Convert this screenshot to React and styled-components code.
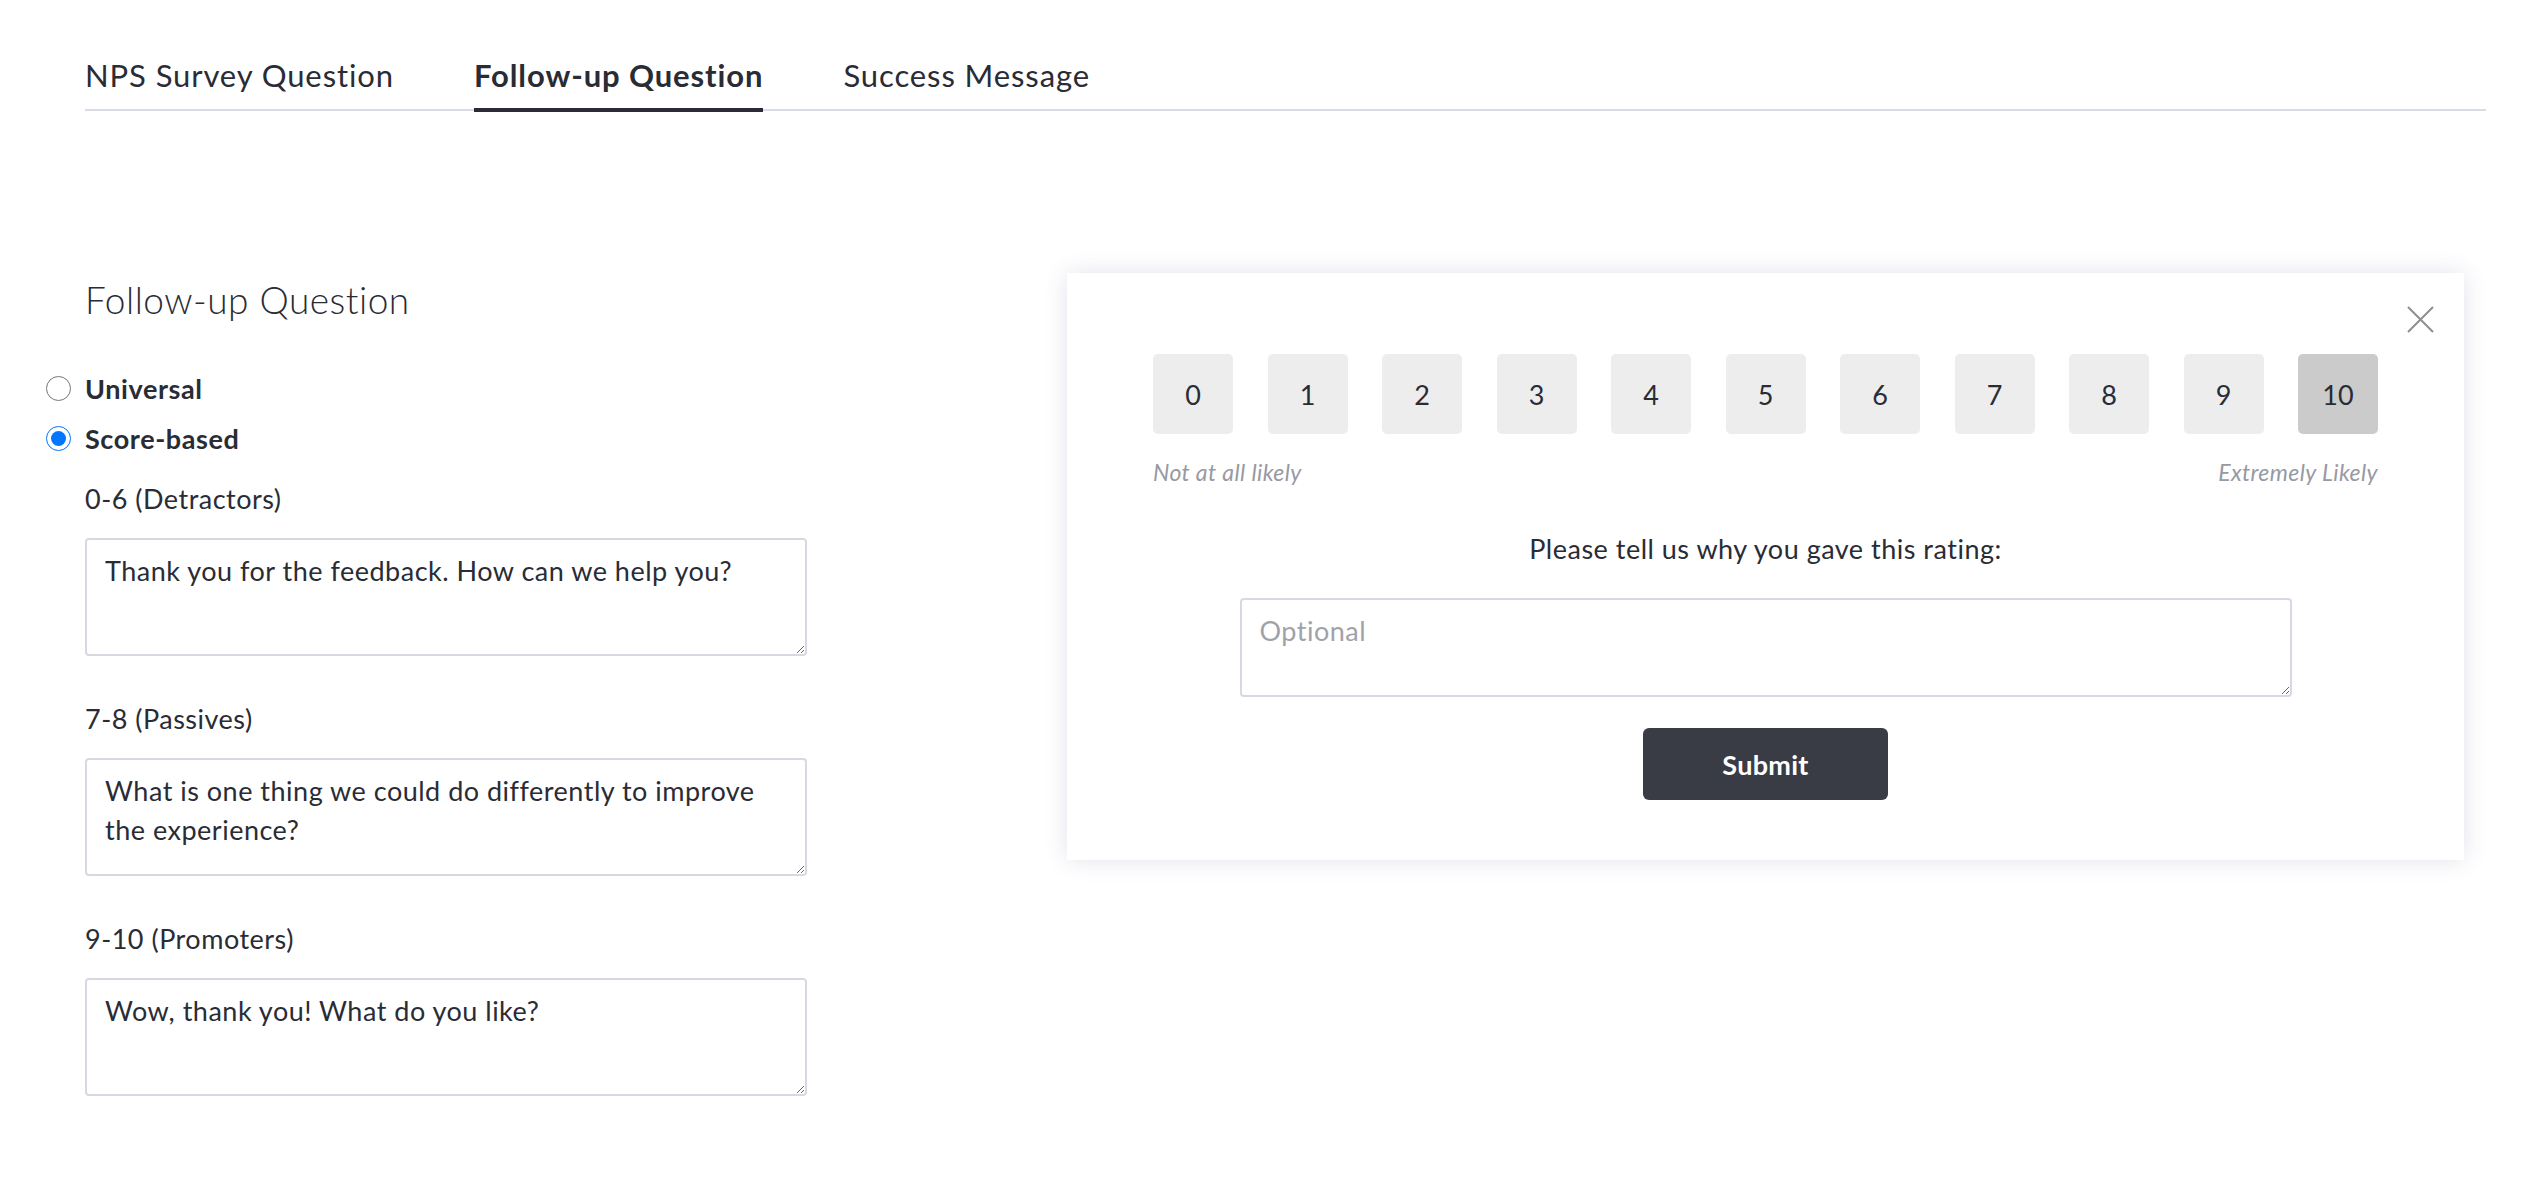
import React, { useState } from 'react'
import styled, { createGlobalStyle } from 'styled-components'

const GlobalStyle = createGlobalStyle`
  body {
    margin: 0;
    background: #ffffff;
    font-family: "Lato", "Liberation Sans", sans-serif;
    color: #2a2c35;
  }
  * { box-sizing: border-box; }
`

const Page = styled.div`
  margin: 0 54px 0 85px;
`

const TabBar = styled.div`
  display: flex;
  align-items: flex-end;
  gap: 80px;
  padding-top: 57px;
  border-bottom: 2px solid #d8dce6;
`

const Tab = styled.div`
  font-size: 31px;
  line-height: 36px;
  letter-spacing: 0.9px;
  font-weight: ${(p) => (p.$active ? 700 : 400)};
  color: #2a2c35;
  padding-bottom: 15px;
  border-bottom: 4px solid ${(p) => (p.$active ? '#2a2b36' : 'transparent')};
  margin-bottom: -3px;
  cursor: pointer;
`

const Content = styled.div`
  display: grid;
  grid-template-columns: 982px 1397px;
  align-items: start;
  margin-top: 162px;
`

const Settings = styled.div`
  display: flex;
  flex-direction: column;
`

const Heading = styled.h2`
  margin: 5px 0 41px;
  font-size: 37px;
  line-height: 44px;
  letter-spacing: 0.5px;
  font-weight: 300;
  color: #2a2c35;
`

const RadioRow = styled.label`
  display: flex;
  align-items: center;
  gap: 14px;
  height: 50px;
  margin-left: -39px;
  font-size: 27px;
  letter-spacing: 0.6px;
  font-weight: 700;
  cursor: pointer;

  input {
    width: 25px;
    height: 25px;
    margin: 0;
  }
`

const Fields = styled.div`
  display: flex;
  flex-direction: column;
  gap: 43px;
  margin-top: 16px;
`

const Field = styled.div`
  display: flex;
  flex-direction: column;
  gap: 20px;
`

const FieldLabel = styled.div`
  font-size: 27px;
  line-height: 39px;
  letter-spacing: 0.5px;
`

const TextArea = styled.textarea`
  width: ${(p) => p.$width}px;
  height: ${(p) => p.$height}px;
  padding: 11px 18px;
  border: 2px solid #d6d9e2;
  border-radius: 4px;
  font-family: "Lato", "Liberation Sans", sans-serif;
  font-size: 27px;
  line-height: 39px;
  letter-spacing: 0.5px;
  color: #2a2c35;
  resize: both;
  outline: none;

  &::placeholder {
    color: #a0a2aa;
  }
`

const Card = styled.div`
  position: relative;
  display: flex;
  flex-direction: column;
  align-items: center;
  padding: 81px 86px 60px;
  background: #ffffff;
  box-shadow: 0 0 22px rgba(50, 60, 110, 0.14);
`

const CloseButton = styled.button`
  position: absolute;
  top: 33px;
  right: 30px;
  width: 27px;
  height: 27px;
  padding: 0;
  border: none;
  background: none;
  cursor: pointer;
`

const Scale = styled.div`
  display: flex;
  justify-content: space-between;
  width: 100%;
`

const ScoreButton = styled.button`
  width: 80px;
  height: 80px;
  border: none;
  border-radius: 5px;
  background: ${(p) => (p.$selected ? '#cbcbcb' : '#ededed')};
  font-family: "Lato", "Liberation Sans", sans-serif;
  font-size: 27px;
  color: #2a2c35;
  cursor: pointer;
`

const ScaleLabels = styled.div`
  display: flex;
  justify-content: space-between;
  width: 100%;
  margin-top: 23px;
  font-size: 23px;
  line-height: 30px;
  letter-spacing: 0.4px;
  font-style: italic;
  color: #9799a3;
`

const Prompt = styled.div`
  margin: 42px 0 30px;
  font-size: 27px;
  line-height: 39px;
  letter-spacing: 0.5px;
`

const SubmitButton = styled.button`
  width: 245px;
  height: 72px;
  margin-top: 31px;
  border: none;
  border-radius: 6px;
  background: #3a3c45;
  color: #ffffff;
  font-family: "Lato", "Liberation Sans", sans-serif;
  font-size: 27px;
  letter-spacing: 0.3px;
  font-weight: 700;
  cursor: pointer;
`

const tabs = ['NPS Survey Question', 'Follow-up Question', 'Success Message']

const fields = [
  { label: '0-6 (Detractors)', text: 'Thank you for the feedback. How can we help you?' },
  { label: '7-8 (Passives)', text: 'What is one thing we could do differently to improve the experience?' },
  { label: '9-10 (Promoters)', text: 'Wow, thank you! What do you like?' },
]

export default function App() {
  const [tab, setTab] = useState(1)
  const [mode, setMode] = useState('score')
  const [score, setScore] = useState(10)

  return (
    <Page>
      <GlobalStyle />
      <TabBar>
        {tabs.map((t, i) => (
          <Tab key={t} $active={tab === i} onClick={() => setTab(i)}>
            {t}
          </Tab>
        ))}
      </TabBar>

      <Content>
        <Settings>
          <Heading>Follow-up Question</Heading>
          <RadioRow>
            <input type="radio" name="mode" checked={mode === 'universal'} onChange={() => setMode('universal')} />
            Universal
          </RadioRow>
          <RadioRow>
            <input type="radio" name="mode" checked={mode === 'score'} onChange={() => setMode('score')} />
            Score-based
          </RadioRow>
          <Fields>
            {fields.map((f) => (
              <Field key={f.label}>
                <FieldLabel>{f.label}</FieldLabel>
                <TextArea $width={722} $height={118} defaultValue={f.text} />
              </Field>
            ))}
          </Fields>
        </Settings>

        <Card>
          <CloseButton aria-label="Close">
            <svg width="27" height="27" viewBox="0 0 27 27">
              <path d="M1 1 L26 26 M26 1 L1 26" stroke="#8f8f8f" strokeWidth="2" fill="none" />
            </svg>
          </CloseButton>
          <Scale>
            {Array.from({ length: 11 }, (_, i) => (
              <ScoreButton key={i} $selected={score === i} onClick={() => setScore(i)}>
                {i}
              </ScoreButton>
            ))}
          </Scale>
          <ScaleLabels>
            <span>Not at all likely</span>
            <span>Extremely Likely</span>
          </ScaleLabels>
          <Prompt>Please tell us why you gave this rating:</Prompt>
          <TextArea $width={1052} $height={99} placeholder="Optional" />
          <SubmitButton>Submit</SubmitButton>
        </Card>
      </Content>
    </Page>
  )
}
